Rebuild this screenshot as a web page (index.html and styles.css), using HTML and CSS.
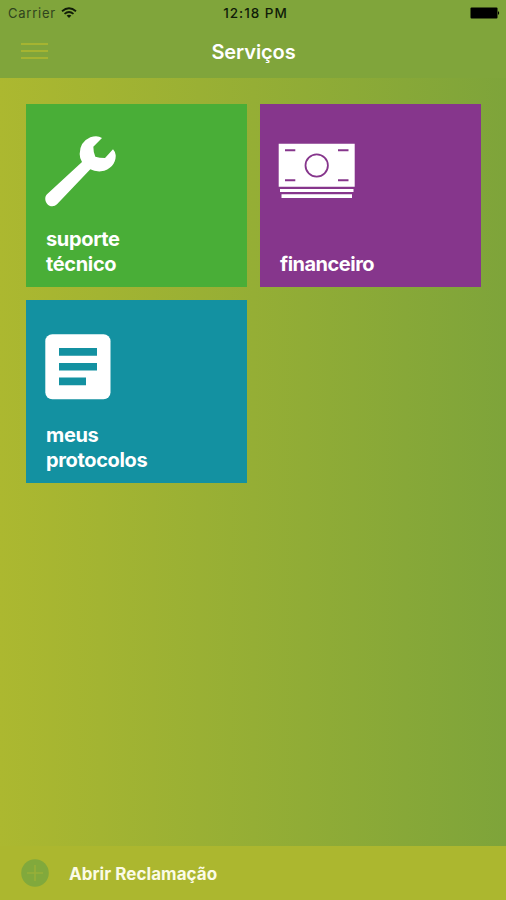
FILE: index.html
```html
<!DOCTYPE html>
<html lang="pt-BR">
<head>
    <meta charset="UTF-8">
    <meta name="viewport" content="width=device-width, initial-scale=1.0">
    <title>Serviços</title>
    <link rel="stylesheet" href="styles.css">
</head>
<body>

    <header>
        <div class="status-bar">
            <div class="carrier">
                <span>Carrier</span>
                <svg width="16" height="12" viewBox="0 0 16 12" fill="none" stroke="#101c08" stroke-width="1.8">
                    <path d="M1 4.2Q8 -1.6 15 4.2"/>
                    <path d="M3.5 6.9Q8 3.2 12.5 6.9"/>
                    <path d="M5.6 8.6Q8 6.8 10.4 8.6L8 11Z" fill="#101c08" stroke="none"/>
                </svg>
            </div>
            <span class="time">12:18 PM</span>
            <svg class="battery" width="30" height="12" viewBox="0 0 30 12">
                <rect x="0.5" y="0.5" width="27" height="11" rx="1"/>
                <path d="M28 4Q30.4 6 28 8Z"/>
            </svg>
        </div>
        <nav>
            <button class="menu" aria-label="Menu"><i></i><i></i><i></i></button>
            <h1>Serviços</h1>
        </nav>
    </header>

    <main>
        <a class="tile suporte">
            <svg width="71" height="71" viewBox="76 122 213 213" fill="#fff">
                <path d="M247 128Q233 119 212 126Q180 140 180 176Q180 190 187 200L82 297C70 309 80 333 98 333Q106 333 112 327L212 222Q224 229 244 228C274 224 290 201 288 179Q286 168 280 162L256 188Q239 188 227 184Q221 172 221 154Z"/>
            </svg>
            <span>suporte<br>técnico</span>
        </a>
        <a class="tile financeiro">
            <svg width="78" height="56" viewBox="0 0 78 56">
                <path d="M0.7 0.7H76.7V43.7H0.7ZM2 46H75.5V49H2ZM3.5 51.3H74V55H3.5Z" fill="#fff"/>
                <path d="M7 7.3H17.3M60 7.3H70.5M7 37.3H17.3M60 37.3H70.5" stroke="#86368c" stroke-width="2"/>
                <circle cx="38.7" cy="22.5" r="11.2" fill="none" stroke="#86368c" stroke-width="1.8"/>
            </svg>
            <span>financeiro</span>
        </a>
        <a class="tile protocolos">
            <svg width="66" height="66" viewBox="0 0 66 66">
                <rect x="0.3" y="0.3" width="65.2" height="65" rx="7" fill="#fff"/>
                <path d="M14 14H52V21.7H14ZM14 29H52V36.5H14ZM14 43.5H41V51.2H14Z" fill="#1391a1"/>
            </svg>
            <span>meus<br>protocolos</span>
        </a>
    </main>

    <footer>
        <svg width="28" height="28" viewBox="0 0 28 28">
            <circle cx="14" cy="14" r="13.8" fill="#81a93c"/>
            <path d="M14 6V22M6 14H22" stroke="#98b038" stroke-width="1.6"/>
        </svg>
        <span>Abrir Reclamação</span>
    </footer>

</body>
</html>
```
FILE: styles.css
```css
* { box-sizing: border-box; }
body {
    margin: 0; height: 900px; display: flex; flex-direction: column;
    font-family: Inter, "Liberation Sans", sans-serif;
    background: linear-gradient(to right, #acb830, #7ea43a);
}
header { height: 78px; background: #80a53b; }

.status-bar {
    display: grid; grid-template-columns: 1fr auto 1fr; align-items: center;
    height: 26px; padding: 0 6px 0 8px; font-size: 13px; color: #101c08;
}
.carrier { display: flex; align-items: center; gap: 5px; color: #2f431d; letter-spacing: 0.75px; }
.time { padding-left: 3px; font-size: 13.5px; font-weight: 500; letter-spacing: 1px; }
.battery { justify-self: end; }

nav { display: grid; grid-template-columns: 60px 1fr 60px; align-items: center; height: 50px; }
.menu {
    display: flex; flex-direction: column; gap: 5px;
    margin-left: 21px; padding: 0; width: 27px; border: none; background: none;
}
.menu i { height: 2px; background: #a5b431; }
h1 { margin: 0; padding: 2px 0 0 1px; text-align: center; font-size: 20px; font-weight: 600; letter-spacing: -0.1px; color: #fff; }

main {
    flex: 1; display: grid; grid-template-columns: 221px 221px;
    grid-auto-rows: 183px; gap: 13px; padding: 26.4px 26px; align-content: start;
}
.tile {
    display: flex; flex-direction: column; justify-content: space-between;
    padding: 32px 19px 11px; color: #fff;
    font-size: 20px; font-weight: 700; line-height: 24.5px; letter-spacing: -0.35px;
}
.tile span { padding-left: 1px; }
.suporte { background: #49ae37; }
.financeiro { background: #86368c; padding-top: 39px; padding-left: 18px; letter-spacing: -0.5px; }
.financeiro span { padding-left: 2px; }
.protocolos { background: #1391a1; padding-top: 34px; }

footer {
    display: flex; align-items: center; gap: 20px; height: 54px; padding-left: 21px;
    background: #acb72f; color: #fbfbe6; font-size: 17px; font-weight: 700;
}
footer span { padding-top: 1px; letter-spacing: 0.05px; }
```
